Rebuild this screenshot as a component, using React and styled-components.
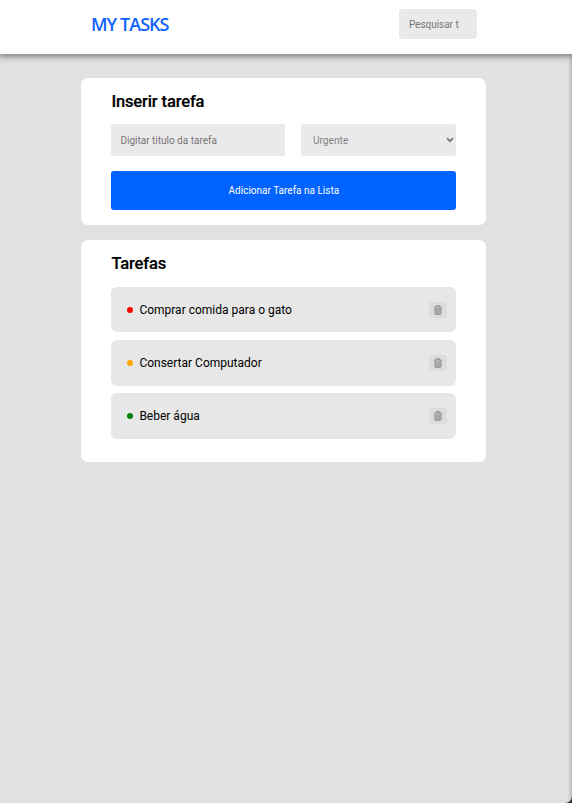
import React from "react";
import styled, { createGlobalStyle } from "styled-components";

const GlobalStyle = createGlobalStyle`
  * { box-sizing: border-box; }
  html, body { margin: 0; background: #333; overflow: hidden; }
  body { font-family: Roboto, "Liberation Sans", sans-serif; color: #000; }
  input, select, button { font-family: inherit; border: 0; outline: 0; margin: 0; }
`;

const Page = styled.div`
  position: relative;
  height: 803px;
  background: #e1e1e1;
  border-bottom-right-radius: 7px;
  overflow: hidden;
`;

const WindowEdge = styled.div`
  position: absolute;
  top: 54px;
  right: 0;
  bottom: 0;
  width: 4px;
  background: linear-gradient(to right, rgba(0, 0, 0, 0), rgba(0, 0, 0, 0.18));
`;

const Header = styled.header`
  height: 54px;
  padding: 9px 95px 0 91px;
  display: flex;
  justify-content: space-between;
  background: #fff;
  box-shadow: 0 0 7px 2px rgba(0, 0, 0, 0.5);
`;

const Logo = styled.h1`
  margin: 3px 0 0;
  font: 600 18px/24px "Open Sans", sans-serif;
  letter-spacing: -0.97px;
  color: #0f62fe;
  white-space: nowrap;
`;

const Field = styled.input`
  width: ${(p) => p.$width}px;
  height: ${(p) => p.$height}px;
  padding: 0 9px;
  border-radius: 3px;
  background: #eaeaea;
  font-size: 10px;
  &::placeholder { color: #757575; opacity: 1; }
`;

const SearchField = styled(Field)`
  padding: 0 18px 0 9.5px;
  letter-spacing: -0.03px;
`;

const Main = styled.main`
  width: 405px;
  margin: 24px 0 0 81.4px;
  display: flex;
  flex-direction: column;
  gap: 15px;
`;

const Card = styled.section`
  height: ${(p) => p.$height}px;
  padding: 13px 30px 0;
  border-radius: 7px;
  background: #fff;
`;

const Heading = styled.h2`
  margin: 0;
  font-size: 16.5px;
  font-weight: 500;
  line-height: 21px;
  letter-spacing: -0.13px;
  -webkit-text-stroke: 0.2px #000;
`;

const FieldRow = styled.div`
  display: flex;
  justify-content: space-between;
  margin: 12px 0 15px;
`;

const SelectBox = styled.div`
  display: grid;
  align-items: center;
  width: 155.5px;
  height: 32px;
  svg { grid-area: 1 / 1; justify-self: end; margin-right: 2px; pointer-events: none; }
`;

const Select = styled.select`
  grid-area: 1 / 1;
  width: 100%;
  height: 32px;
  padding: 0 12px;
  appearance: none;
  border-radius: 3px;
  background: #eaeaea;
  color: #808080;
  font-size: 10px;
  letter-spacing: 0.1px;
`;

const AddButton = styled.button`
  width: 100%;
  height: 39px;
  padding: 0;
  border-radius: 3px;
  background: #0062ff;
  color: #fff;
  font-size: 10px;
`;

const TaskList = styled.ul`
  display: flex;
  flex-direction: column;
  gap: 7.3px;
  margin: 12.7px 0 0;
  padding: 0;
  list-style: none;
`;

const Task = styled.li`
  display: flex;
  align-items: center;
  height: 45.8px;
  padding: 0 9.2px 0 15.6px;
  border-radius: 6px;
  background: #e7e7e7;
  font-size: 12px;
`;

const Dot = styled.span`
  width: 6px;
  height: 6px;
  margin-right: 6.4px;
  border-radius: 50%;
  background: ${(p) => p.$color};
`;

const TaskTitle = styled.span`
  flex: 1;
  line-height: 16px;
`;

const DeleteButton = styled.button`
  display: flex;
  align-items: center;
  justify-content: center;
  width: 18px;
  height: 16px;
  padding: 0;
  border-radius: 3px;
  background: #dcdcdc;
`;

const TrashIcon = () => (
  <svg width="8" height="10" viewBox="0 0 8 10" fill="none" stroke="#8c8c8c">
    <path d="M2.5 2V.7h3V2M.3 2.1h7.4" />
    <path d="M1 2.2v6.3q0 .8.8.8h4.4q.8 0 .8-.8V2.2" fill="#b4b4b4" />
    <path d="M3 3.5v4.7M5 3.5v4.7" strokeWidth=".6" />
  </svg>
);

const ChevronIcon = () => (
  <svg width="8" height="6" viewBox="0 0 8 6" fill="none" stroke="#777" strokeWidth="1.7">
    <path d="M1 1.2l3 3 3-3" />
  </svg>
);

const tasks = [
  { title: "Comprar comida para o gato", color: "#ff0000" },
  { title: "Consertar Computador", color: "#ffa500" },
  { title: "Beber água", color: "#008000" },
];

export default function App() {
  return (
    <>
      <GlobalStyle />
      <Page>
        <Header>
          <Logo>MY TASKS</Logo>
          <SearchField $width={77.6} $height={30} placeholder="Pesquisar tarefa" />
        </Header>
        <Main>
          <Card $height={147}>
            <Heading>Inserir tarefa</Heading>
            <FieldRow>
              <Field $width={173.5} $height={32} placeholder="Digitar titulo da tarefa" />
              <SelectBox>
                <Select defaultValue="Urgente">
                  <option>Urgente</option>
                </Select>
                <ChevronIcon />
              </SelectBox>
            </FieldRow>
            <AddButton>Adicionar Tarefa na Lista</AddButton>
          </Card>
          <Card $height={222}>
            <Heading>Tarefas</Heading>
            <TaskList>
              {tasks.map((task) => (
                <Task key={task.title}>
                  <Dot $color={task.color} />
                  <TaskTitle>{task.title}</TaskTitle>
                  <DeleteButton aria-label="Excluir tarefa">
                    <TrashIcon />
                  </DeleteButton>
                </Task>
              ))}
            </TaskList>
          </Card>
        </Main>
        <WindowEdge />
      </Page>
    </>
  );
}
